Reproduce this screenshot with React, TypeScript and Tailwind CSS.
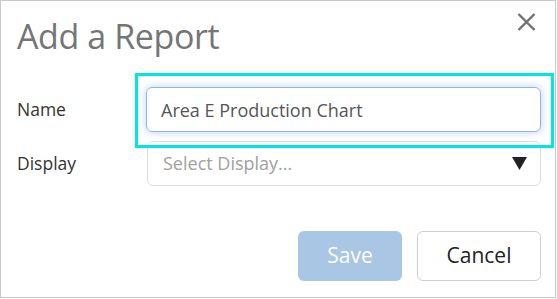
import React, { useEffect, useRef, useState } from "react";

const font = { fontFamily: '"Open Sans", "Noto Sans", sans-serif' };

export default function App() {
  const [name, setName] = useState("Area E Production Chart");
  const inputRef = useRef<HTMLInputElement>(null);

  useEffect(() => {
    const el = inputRef.current;
    if (el) {
      el.focus();
      el.setSelectionRange(el.value.length, el.value.length);
    }
  }, []);

  return (
    <div
      className="w-[556px] h-[298px] border border-[#c9c9c9] bg-white relative text-[#333]"
      style={font}
    >
      <div className="flex items-start justify-between pl-[16px] pr-[18px] pt-[13px]">
        <h1 className="text-[34px] leading-[44px] text-[#757575] tracking-[-0.4px]">Add a Report</h1>
        <button className="mt-[-3px] w-[22px] h-[22px] flex items-center justify-center text-[#707070]">
          <svg width="19" height="18" viewBox="0 0 19 18">
            <path d="M1.5 1 L17.5 17 M17.5 1 L1.5 17" stroke="currentColor" strokeWidth="2.4" />
          </svg>
        </button>
      </div>

      <div className="mt-[29px] flex flex-col gap-[9px] pr-[14px]">
        <div className="flex items-center">
          <label className="w-[145px] pl-[16px] text-[17.5px] text-[#333]">Name</label>
          <input
            ref={inputRef}
            value={name}
            onChange={(e) => setName(e.target.value)}
            className="flex-1 h-[45px] rounded-[6px] border border-[#8db6e6] px-[14px] text-[18px] text-[#555] caret-[#333] outline-none shadow-[0_0_8px_rgba(102,153,230,0.45)]"
          />
        </div>
        <div className="flex items-center">
          <label className="w-[146px] pl-[16px] text-[17.5px] text-[#333]">Display</label>
          <div className="flex-1 h-[45px] rounded-[6px] border border-[#dcdcdc] pl-[15px] pr-[12px] flex items-center justify-between">
            <span className="text-[18px] text-[#a0a0a0]">Select Display...</span>
            <svg width="15" height="13" viewBox="0 0 15 13" className="mr-[1px]">
              <path d="M0 0 H15 L7.5 13 Z" fill="#222" />
            </svg>
          </div>
        </div>
      </div>

      <div className="flex justify-end gap-[15px] pr-[14px] mt-[45px]">
        <button className="w-[104px] h-[50px] rounded-[6px] bg-[#a9c6e4] text-white text-[21px]">
          Save
        </button>
        <button className="w-[124px] h-[50px] rounded-[6px] border border-[#cfcfcf] bg-white text-[#222] text-[21px]">
          Cancel
        </button>
      </div>

      <div className="absolute left-[134px] top-[72px] w-[419px] h-[75px] border-[3px] border-[#00e5e5] pointer-events-none" />
    </div>
  );
}
